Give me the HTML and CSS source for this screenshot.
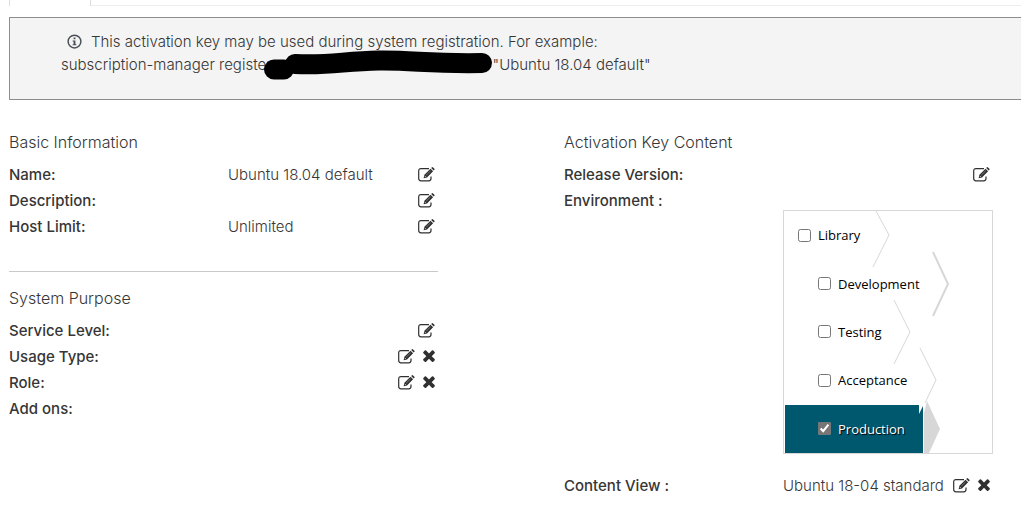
FILE: index.html
```html
<!DOCTYPE html>
<html lang="en">
<head>
<meta charset="utf-8">
<title>Activation Key</title>
<link rel="stylesheet" href="styles.css">
</head>
<body>
<svg class="symbols" aria-hidden="true">
  <symbol id="edit" viewBox="0 0 17 15">
    <path d="M11 1.600H3Q.7 1.600.7 3.800V11.600Q.7 13.800 3 13.800H10.800Q13 13.800 13 11.600V9.600" fill="none" stroke="currentColor" stroke-width="1.200"/>
    <path d="M5.600 11.200L6.400 7.800L12.500 1.700L15.100 4.300L9 10.400ZM13.200 1L14 .3Q14.500-.1 15 .4L16.400 1.800Q16.900 2.300 16.400 2.800L15.700 3.500Z" fill="currentColor"/>
    <path d="M8.200 8.200L12.600 3.800" stroke="#aaa" stroke-width=".6"/>
    <path d="M6.700 8.900L7.800 10" stroke="#fff" stroke-width=".7"/>
  </symbol>
  <symbol id="remove" viewBox="302 340 1188 1214">
    <path fill="currentColor" d="M1490 1322q0 40-28 68l-136 136q-28 28-68 28t-68-28l-294-294-294 294q-28 28-68 28t-68-28l-136-136q-28-28-28-68t28-68l294-294-294-294q-28-28-28-68t28-68l136-136q28-28 68-28t68 28l294 294 294-294q28-28 68-28t68 28l136 136q28 28 28 68t-28 68l-294 294 294 294q28 28 28 68z"/>
  </symbol>
</svg>

<div class="tabs"><div class="tab-active"></div><div class="tab-rest"></div></div>

<main class="page">
  <section class="alert">
    <p class="alert-line">
      <svg class="info" viewBox="0 0 16 16" aria-hidden="true"><circle cx="8" cy="8" r="6.8" fill="none" stroke="currentColor" stroke-width="1.6"/><path d="M7 3.800h2v1.800H7zM6 6.800h3v4h1v1.200H6v-1.200h1V8H6z" fill="currentColor"/></svg><span>This activation key may be used during system registration. For example:</span>
    </p>
    <p class="command"><span>subscription-manager register</span><svg class="redaction" viewBox="0 0 229 30" aria-hidden="true"><path d="M10 19.500H20M31 14C65 16 80 11 115 10.500S165 14 218 13" fill="none" stroke="#000" stroke-width="20" stroke-linecap="round"/></svg><span>"Ubuntu 18.04 default"</span></p>
  </section>

  <div class="columns">
    <div class="column">
      <section>
        <h2>Basic Information</h2>
        <dl>
          <div class="row"><dt>Name:</dt><dd>Ubuntu 18.04 default</dd><dd class="actions"><button aria-label="Edit name"><svg class="edit"><use href="#edit"/></svg></button></dd></div>
          <div class="row"><dt>Description:</dt><dd></dd><dd class="actions"><button aria-label="Edit description"><svg class="edit"><use href="#edit"/></svg></button></dd></div>
          <div class="row"><dt>Host Limit:</dt><dd>Unlimited</dd><dd class="actions"><button aria-label="Edit host limit"><svg class="edit"><use href="#edit"/></svg></button></dd></div>
        </dl>
      </section>
      <hr>
      <section>
        <h2>System Purpose</h2>
        <dl>
          <div class="row"><dt>Service Level:</dt><dd></dd><dd class="actions"><button aria-label="Edit service level"><svg class="edit"><use href="#edit"/></svg></button></dd></div>
          <div class="row"><dt>Usage Type:</dt><dd></dd><dd class="actions"><button aria-label="Edit usage type"><svg class="edit"><use href="#edit"/></svg></button><button aria-label="Clear usage type"><svg class="remove"><use href="#remove"/></svg></button></dd></div>
          <div class="row"><dt>Role:</dt><dd></dd><dd class="actions"><button aria-label="Edit role"><svg class="edit"><use href="#edit"/></svg></button><button aria-label="Clear role"><svg class="remove"><use href="#remove"/></svg></button></dd></div>
          <div class="row"><dt>Add ons:</dt><dd></dd></div>
        </dl>
      </section>
    </div>

    <section class="column">
      <h2>Activation Key Content</h2>
      <dl>
        <div class="row"><dt>Release Version:</dt><dd></dd><dd class="actions"><button aria-label="Edit release version"><svg class="edit"><use href="#edit"/></svg></button></dd></div>
        <div class="row row-paths"><dt>Environment :</dt>
          <dd class="paths">
            <ul>
              <li class="library"><label><input type="checkbox">Library</label></li>
              <li><label><input type="checkbox">Development</label></li>
              <li><label><input type="checkbox">Testing</label></li>
              <li><label><input type="checkbox">Acceptance</label></li>
              <li class="selected"><label><input type="checkbox" checked>Production</label></li>
            </ul>
            <svg class="chevrons" viewBox="0 0 208 242" aria-hidden="true">
              <path d="M135 137L152 169L135 203Z" fill="#fff"/>
              <path d="M140 202L143 190L156 218L145 242H140Z" fill="#d7d7d7"/>
              <g fill="none" stroke="#d7d7d7">
                <path d="M92 0L105 24L89 56"/>
                <path d="M149 41L164 73L149 105" stroke-width="2"/>
                <path d="M110 89L126 121L110 153"/>
                <path d="M136 137L152 169L141 192"/>
              </g>
            </svg>
          </dd>
        </div>
        <div class="row row-view"><dt>Content View :</dt><dd>Ubuntu 18-04 standard</dd><dd class="actions"><button aria-label="Edit content view"><svg class="edit"><use href="#edit"/></svg></button><button aria-label="Clear content view"><svg class="remove"><use href="#remove"/></svg></button></dd></div>
      </dl>
    </section>
  </div>
</main>
</body>
</html>
```
FILE: styles.css
```css
* { box-sizing: border-box; }
body { margin: 0; background: #fff; color: #363636; font: 300 15px/24px Inter, "Open Sans", sans-serif; overflow-x: hidden; }
p, h2, dl, dd, ul { margin: 0; padding: 0; }
.symbols { position: absolute; width: 0; height: 0; }
svg { display: block; }

.tabs { display: flex; height: 6px; padding-left: 9px; }
.tab-active { width: 82px; border: solid #ddd; border-width: 0 1px; }
.tab-rest { flex: 1; border-bottom: 1px solid #ededed; }

.page { padding: 11px 0 0 9px; }
.alert { padding: 12px 51px 23px; background: #f4f4f4; border: 1px solid #8b8d8f; border-right: 0; border-radius: 1px 0 0 1px; line-height: 23px; }
.alert-line { display: flex; align-items: center; gap: 9px; padding-left: 6px; }
.info { width: 15px; height: 15px; color: #4b5157; }
.command { display: flex; align-items: center; white-space: pre; }
.redaction { position: relative; flex: none; width: 229px; height: 30px; margin: -4px 0 -4px -8px; }

.columns { display: grid; grid-template-columns: 1fr 1fr; gap: 126px; padding: 29px 28px 12px 0; }
h2 { margin-bottom: 7px; font-size: 16px; line-height: 26px; font-weight: 300; }
.row { display: flex; line-height: 26px; }
dt { flex: 0 0 219px; font-weight: 500; }
dd { white-space: nowrap; }
.actions { display: flex; align-items: center; gap: 8px; margin-left: auto; padding: 0 3px 2px 0; }
button { display: block; padding: 0; border: 0; background: none; color: #303030; cursor: pointer; }
.edit { width: 17px; height: 15px; }
.remove { width: 12px; height: 12px; }
hr { height: 1px; margin: 31px 0 13px; border: 0; background: #c9c9c9; }

.paths { position: relative; flex: 1; margin-top: 22px; border: 1px solid #d7d7d7; }
.paths ul { display: grid; grid-template-rows: repeat(5, 1fr); height: 242px; padding-left: 1px; list-style: none; font: 13px/18px "Open Sans", sans-serif; color: #000; }
.paths li { display: flex; align-items: center; padding-left: 33px; }
.paths .library { padding-left: 13px; }
.paths label { display: flex; align-items: center; gap: 7px; }
.paths input { width: 13px; height: 13px; margin: 0; accent-color: #767676; }
.paths .selected { width: 138px; background: #00586f; color: #fff; text-shadow: 1px 1px 1px #000; }
.chevrons { position: absolute; top: 0; left: 0; width: 208px; height: 242px; pointer-events: none; }
.row-view { margin-top: 19px; }
```
